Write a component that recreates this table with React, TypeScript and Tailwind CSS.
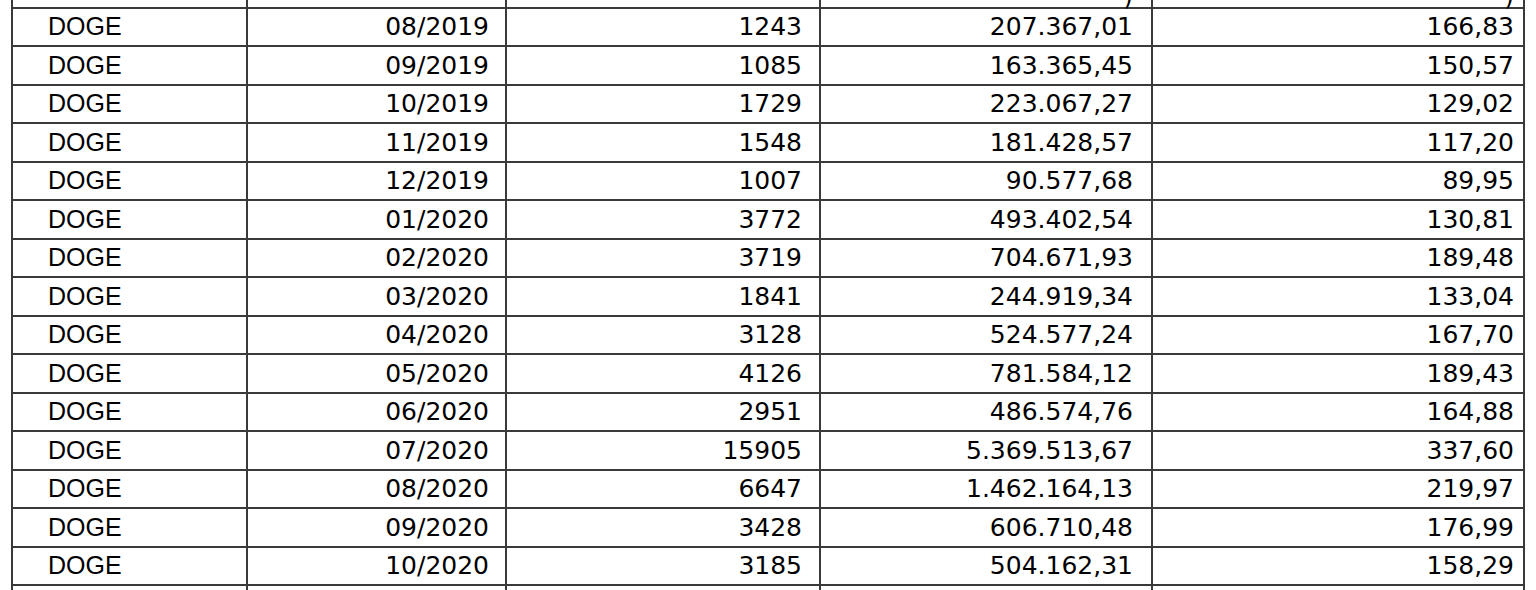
const rows: [string, string, string, string][] = [
  ["08/2019", "1243", "207.367,01", "166,83"],
  ["09/2019", "1085", "163.365,45", "150,57"],
  ["10/2019", "1729", "223.067,27", "129,02"],
  ["11/2019", "1548", "181.428,57", "117,20"],
  ["12/2019", "1007", "90.577,68", "89,95"],
  ["01/2020", "3772", "493.402,54", "130,81"],
  ["02/2020", "3719", "704.671,93", "189,48"],
  ["03/2020", "1841", "244.919,34", "133,04"],
  ["04/2020", "3128", "524.577,24", "167,70"],
  ["05/2020", "4126", "781.584,12", "189,43"],
  ["06/2020", "2951", "486.574,76", "164,88"],
  ["07/2020", "15905", "5.369.513,67", "337,60"],
  ["08/2020", "6647", "1.462.164,13", "219,97"],
  ["09/2020", "3428", "606.710,48", "176,99"],
  ["10/2020", "3185", "504.162,31", "158,29"],
];

const cell = "border-2 border-[#3a3a3a] h-[38.5px] p-0 leading-none";
const num = "font-['Verdana','DejaVu_Sans',sans-serif] text-[25px] text-right";

export default function App() {
  return (
    <div className="w-[1536px] h-[590px] overflow-hidden bg-white text-black">
      <table className="table-fixed border-collapse ml-[11px] -mt-[32px]">
        <colgroup>
          <col className="w-[235px]" />
          <col className="w-[259px]" />
          <col className="w-[314px]" />
          <col className="w-[332px]" />
          <col className="w-[372px]" />
        </colgroup>
        <tbody>
          {/* linha de cabeçalho cortada no topo */}
          <tr>
            <td className={cell}></td>
            <td className={cell}></td>
            <td className={cell}></td>
            <td className={`${cell} ${num} pr-[18px] align-bottom`}>
              <span className="relative top-[2px]">)</span>
            </td>
            <td className={`${cell} ${num} pr-[9px] align-bottom`}>
              <span className="relative top-[2px]">)</span>
            </td>
          </tr>
          {rows.map((r) => (
            <tr key={r[0]}>
              <td className={`${cell} pl-[35px] font-['Liberation_Sans',Arial,sans-serif] text-[25px]`}>DOGE</td>
              <td className={`${cell} ${num} pr-[16px]`}>{r[0]}</td>
              <td className={`${cell} ${num} pr-[17px]`}>{r[1]}</td>
              <td className={`${cell} ${num} pr-[18px]`}>{r[2]}</td>
              <td className={`${cell} ${num} pr-[9px]`}>{r[3]}</td>
            </tr>
          ))}
          <tr>
            <td className={cell}></td>
            <td className={cell}></td>
            <td className={cell}></td>
            <td className={cell}></td>
            <td className={cell}></td>
          </tr>
        </tbody>
      </table>
    </div>
  );
}
